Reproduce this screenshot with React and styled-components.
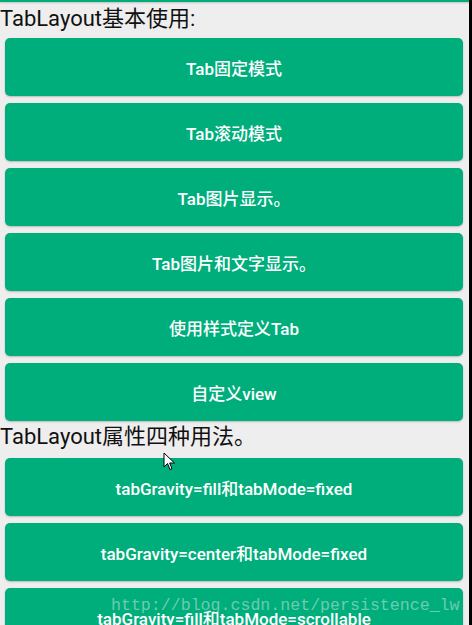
import React from "react";
import styled, { createGlobalStyle } from "styled-components";

const GlobalStyle = createGlobalStyle`
  html, body {
    margin: 0;
    padding: 0;
    background: #eeeeee;
    overflow: hidden;
  }
`;

const Screen = styled.div`
  position: relative;
  display: flex;
  width: 472px;
  height: 625px;
  overflow: hidden;
  background: #eeeeee;
  font-family: Roboto, "Noto Sans CJK SC", sans-serif;
`;

const Content = styled.div`
  flex: 1;
  display: flex;
  flex-direction: column;
  & > * {
    flex-shrink: 0;
  }
`;

const EdgeStrip = styled.div`
  width: 3px;
  background: #000;
`;

const TopBar = styled.div`
  height: 2px;
  background: #00ac7a;
  box-shadow: 0 1px 2px rgba(0, 0, 0, 0.2);
`;

const Heading = styled.h2`
  margin: 0;
  height: ${(p) => p.$height}px;
  line-height: ${(p) => p.$line}px;
  font-size: 22px;
  font-weight: 400;
  color: #111;
  white-space: nowrap;
`;

const ButtonList = styled.div`
  display: flex;
  flex-direction: column;
  gap: 7px;
  padding: 0 6px 0 5px;
`;

const ActionButton = styled.button`
  flex-shrink: 0;
  height: 58px;
  border: none;
  border-radius: 5px;
  background: #00ae7c;
  color: #fff;
  font-family: Roboto, "Noto Sans CJK SC", sans-serif;
  font-size: 17px;
  font-weight: 500;
  box-shadow: 0 1px 2px rgba(0, 0, 0, 0.22);
  display: flex;
  align-items: center;
  justify-content: center;
  white-space: nowrap;
`;

const Watermark = styled.div`
  position: absolute;
  left: 111px;
  top: 596px;
  font-family: "Liberation Mono", monospace;
  font-size: 16.6px;
  color: rgba(215, 235, 228, 0.5);
  pointer-events: none;
`;

const Cursor = styled.svg`
  position: absolute;
  left: 163px;
  top: 452px;
`;

const basic = [
  "Tab固定模式",
  "Tab滚动模式",
  "Tab图片显示。",
  "Tab图片和文字显示。",
  "使用样式定义Tab",
  "自定义view",
];

const gravity = [
  "tabGravity=fill和tabMode=fixed",
  "tabGravity=center和tabMode=fixed",
  "tabGravity=fill和tabMode=scrollable",
];

const App = () => {
  return (
    <Screen>
      <GlobalStyle />
      <Content>
        <TopBar />
        <Heading $height={36} $line={34}>TabLayout基本使用:</Heading>
        <ButtonList>
          {basic.map((label) => (
            <ActionButton key={label}>{label}</ActionButton>
          ))}
        </ButtonList>
        <Heading $height={37} $line={32}>TabLayout属性四种用法。</Heading>
        <ButtonList>
          {gravity.map((label) => (
            <ActionButton key={label}>{label}</ActionButton>
          ))}
        </ButtonList>
      </Content>
      <EdgeStrip />
      <Watermark>http://blog.csdn.net/persistence_lw</Watermark>
      <Cursor width="13" height="20" viewBox="0 0 13 20">
        <path
          d="M1 1 L1 15 L4.5 11.5 L7 17.5 L9 16.6 L6.6 11 L11.5 11 Z"
          fill="#fff"
          stroke="#000"
          strokeWidth="1"
          strokeLinejoin="round"
        />
      </Cursor>
    </Screen>
  );
};

export default App;
